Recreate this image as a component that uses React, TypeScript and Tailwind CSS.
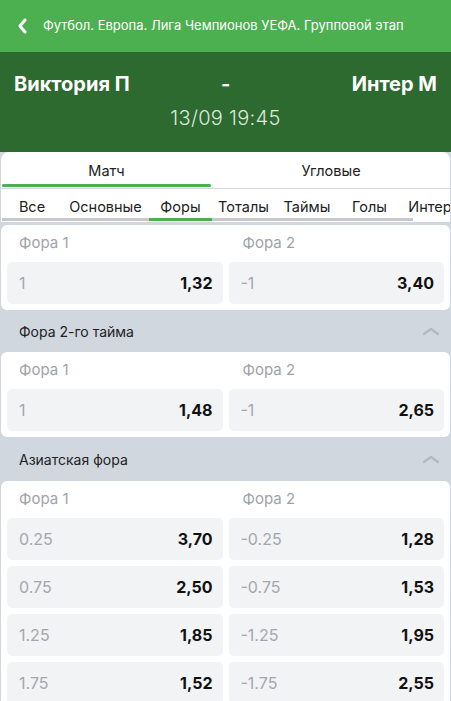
import React from "react";

const font = { fontFamily: "Inter, 'Noto Sans', sans-serif" };

function Cell({ l, r }: { l: string; r: string }) {
  return (
    <div className="flex h-[42px] items-center justify-between rounded-[5px] bg-[#f2f3f5] pl-[12px] pr-[10px]">
      <span className="text-[16px] text-[#a3a7ad]">{l}</span>
      <span className="text-[16px] font-bold text-[#111]">{r}</span>
    </div>
  );
}

function Card({ rows }: { rows: [string, string, string, string][] }) {
  return (
    <div className="mx-[1px] rounded-[6px] bg-white px-[6px] pb-[6px]">
      <div className="grid h-[37px] grid-cols-2 items-center gap-[6px]">
        <span className="pl-[12px] text-[15px] text-[#9ea3a9]">Фора 1</span>
        <span className="pl-[14px] text-[15px] text-[#9ea3a9]">Фора 2</span>
      </div>
      <div className="grid grid-cols-2 gap-[6px]">
        {rows.map((r, i) => (
          <React.Fragment key={i}>
            <Cell l={r[0]} r={r[1]} />
            <Cell l={r[2]} r={r[3]} />
          </React.Fragment>
        ))}
      </div>
    </div>
  );
}

function Section({ title, h }: { title: string; h: string }) {
  return (
    <div className={`flex ${h} items-center justify-between pl-[19px] pr-[11px]`}>
      <span className="text-[14px] text-[#222]">{title}</span>
      <svg width="18" height="10" viewBox="0 0 18 10">
        <path d="M2 8 L9 3 L16 8" fill="none" stroke="#b3b8be" strokeWidth="2.2" strokeLinecap="round" strokeLinejoin="round" />
      </svg>
    </div>
  );
}

export default function App() {
  const tabs: [string, string][] = [
    ["Все", "w-[60px]"],
    ["Основные", "w-[87px]"],
    ["Форы", "w-[63px]"],
    ["Тоталы", "w-[63px]"],
    ["Таймы", "w-[64px]"],
    ["Голы", "w-[61px]"],
    ["Интер", "w-[60px]"],
  ];
  return (
    <div className="h-[701px] w-[451px] overflow-hidden bg-[#d1d7de]" style={font}>
      <div className="flex h-[52px] items-center bg-[#4caf50] pl-[17px]">
        <svg width="11" height="16" viewBox="0 0 11 16">
          <path d="M8 2 L3 8 L8 14" fill="none" stroke="white" strokeWidth="3" strokeLinecap="round" strokeLinejoin="round" />
        </svg>
        <span className="ml-[15px] text-[13px] text-white">Футбол. Европа. Лига Чемпионов УЕФА. Групповой этап</span>
      </div>
      <div className="h-[100px] bg-[#2c6a2f] px-[14px] pt-[17px]">
        <div className="relative flex items-center justify-between text-[20px] font-bold text-white">
          <span>Виктория П</span>
          <span className="absolute left-[207px]">-</span>
          <span>Интер М</span>
        </div>
        <div className="mt-[4px] text-center text-[20px] font-light tracking-[0.3px] text-[#dfe8df]">13/09 19:45</div>
      </div>
      <div className="mx-[1px] rounded-t-[8px] bg-white">
        <div className="flex h-[36px]">
          <div className="flex w-[211px] flex-col">
            <div className="flex flex-1 items-center justify-center pt-[5px] text-[14.5px] text-[#222]">Матч</div>
            <div className="mx-[1px] mb-[1px] h-[3px] rounded-full bg-[#4caf50]" />
          </div>
          <div className="flex flex-1 items-center justify-center pt-[1px] text-[14.5px] text-[#222]">Угловые</div>
        </div>
      </div>
      <div className="h-[1px]" />
      <div className="mx-[1px] bg-white">
        <div className="flex h-[29px] items-center overflow-hidden whitespace-nowrap pl-[1px] pt-[7px]">
          {tabs.map(([t, w]) => (
            <div key={t} className={`${w} shrink-0 text-center text-[14.5px] text-[#222]`}>{t}</div>
          ))}
        </div>
        <div className="ml-[1px] flex h-[3px] w-[411px] bg-[#c8c8c8]">
          <div className="ml-[147px] h-[3px] w-[63px] bg-[#4caf50]" />
        </div>
        <div className="h-[1px]" />
      </div>
      <div className="h-[3px]" />
      <Card rows={[["1", "1,32", "-1", "3,40"]]} />
      <Section title="Фора 2-го тайма" h="h-[42px]" />
      <Card rows={[["1", "1,48", "-1", "2,65"]]} />
      <Section title="Азиатская фора" h="h-[44px]" />
      <Card
        rows={[
          ["0.25", "3,70", "-0.25", "1,28"],
          ["0.75", "2,50", "-0.75", "1,53"],
          ["1.25", "1,85", "-1.25", "1,95"],
          ["1.75", "1,52", "-1.75", "2,55"],
        ]}
      />
    </div>
  );
}
